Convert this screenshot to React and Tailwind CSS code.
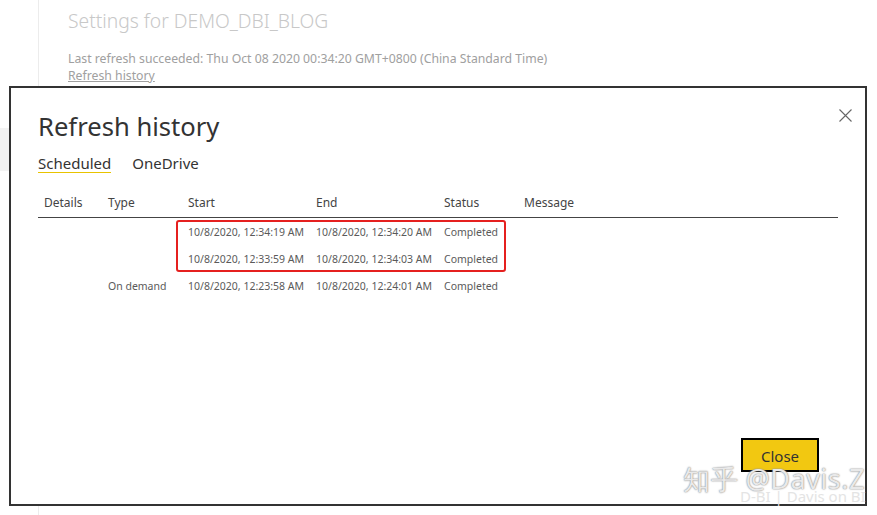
import React from "react";

const rows = [
  { type: "", start: "10/8/2020, 12:34:19 AM", end: "10/8/2020, 12:34:20 AM", status: "Completed" },
  { type: "", start: "10/8/2020, 12:33:59 AM", end: "10/8/2020, 12:34:03 AM", status: "Completed" },
  { type: "On demand", start: "10/8/2020, 12:23:58 AM", end: "10/8/2020, 12:24:01 AM", status: "Completed" },
];

export default function App() {
  return (
    <div
      className="relative w-[877px] h-[515px] overflow-hidden bg-white"
      style={{ fontFamily: '"Noto Sans", "Open Sans", Arial, sans-serif' }}
    >
      {/* background page */}
      <div className="absolute left-0 top-[128px] w-[9px] h-[43px] bg-[#f3f3f3]" />
      <div className="ml-[38px] pt-[8px] border-l border-[#ececec] h-[515px] pl-[29px]">
        <div className="text-[19.3px] leading-[26px] text-[#c8c8c8] font-light">Settings for DEMO_DBI_BLOG</div>
        <div className="mt-[16px] text-[12.25px] leading-[17px] text-[#a0a0a0]">
          Last refresh succeeded: Thu Oct 08 2020 00:34:20 GMT+0800 (China Standard Time)
        </div>
        <div className="text-[12.25px] leading-[17px] text-[#a0a0a0] underline">Refresh history</div>
      </div>

      {/* modal */}
      <div className="absolute left-[9px] top-[86px] w-[858px] h-[420px] bg-white border-2 border-[#333333] flex flex-col">
        <button className="absolute right-[12px] top-[19px] w-[16px] h-[16px] flex items-center justify-center">
          <svg width="13" height="13" viewBox="0 0 13 13">
            <path d="M0.5 0.5 L12.5 12.5 M12.5 0.5 L0.5 12.5" stroke="#666" strokeWidth="1.1" fill="none" />
          </svg>
        </button>
        <div className="pl-[27px] pr-[27px] pt-[21px] flex flex-col">
          <h1 className="text-[25.6px] leading-[36px] text-[#333333]">Refresh history</h1>
          <div className="mt-[9px] flex gap-[21px] text-[15px] leading-[18px] text-[#333333]">
            <div className="border-b border-[#e8c300] pb-[0px]">Scheduled</div>
            <div>OneDrive</div>
          </div>
          <div className="mt-[22px] w-[800px] flex text-[12px] leading-[16px] text-[#444444] border-b border-[#444444] pb-[6px]">
            <div className="w-[70px] pl-[6px]">Details</div>
            <div className="w-[80px]">Type</div>
            <div className="w-[128px]">Start</div>
            <div className="w-[128px]">End</div>
            <div className="w-[80px]">Status</div>
            <div>Message</div>
          </div>
          <div className="relative w-[800px] pt-[0px] text-[10.5px] leading-[16px] text-[#5a5a5a]">
            <div className="absolute left-[138px] top-[2px] w-[330px] h-[52px] border-2 border-[#e5201f] rounded-[3px]" />
            {rows.map((r, i) => (
              <div key={i} className="flex h-[27px] items-center">
                <div className="w-[70px]" />
                <div className="w-[80px]">{r.type}</div>
                <div className="w-[128px]">{r.start}</div>
                <div className="w-[128px]">{r.end}</div>
                <div className="w-[80px]">{r.status}</div>
              </div>
            ))}
          </div>
        </div>
        <div className="mt-auto mb-[32px] mr-[46px] self-end">
          <button className="w-[78px] h-[34px] pt-[3px] bg-[#f2c811] border-2 border-black text-[15px] text-[#333333]">Close</button>
        </div>
      </div>

      {/* watermark */}
      <div className="absolute left-[683px] top-[462px] text-[27px] leading-[34px] text-white/80 tracking-[0.5px]" style={{ textShadow: "0 0 2px #999, 0 0 1px #777" }}>
        知乎 @Davis.Z
      </div>
      <div className="absolute left-[740px] top-[486px] text-[15px] leading-[20px] text-[#e4e4e4]">D-BI | Davis on BI</div>
    </div>
  );
}
